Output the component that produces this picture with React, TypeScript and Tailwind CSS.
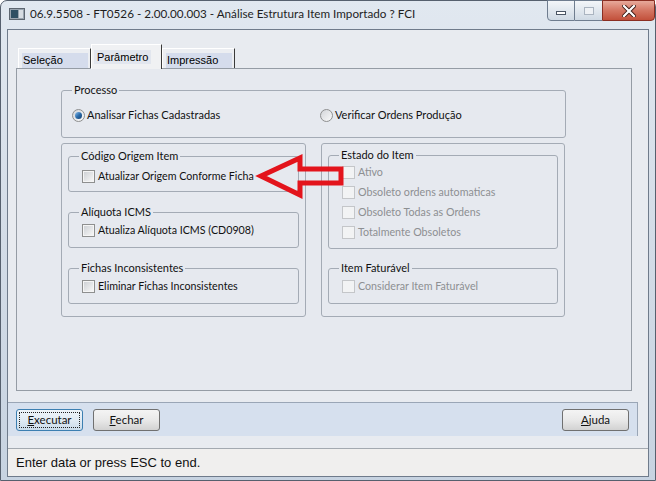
import React from "react";

const seg = { fontFamily: '"Lato", "Open Sans", sans-serif' };
const ms = { fontFamily: '"Liberation Sans", Arial, sans-serif' };

function Box({ disabled }: { disabled?: boolean }) {
  return disabled ? (
    <span className="w-[13px] h-[13px] border border-[#c4c6c9] bg-[#f2f3f4] shrink-0" />
  ) : (
    <span className="w-[13px] h-[13px] border border-[#8e8f8f] p-[1px] bg-[#f5f5f5] shrink-0 flex">
      <span className="flex-1 bg-gradient-to-br from-[#cfd2d6] to-[#f6f6f6]" />
    </span>
  );
}

function Check({
  label,
  disabled,
  className = "",
}: {
  label: string;
  disabled?: boolean;
  className?: string;
}) {
  return (
    <div className={`flex items-center h-[20px] ${className}`}>
      <Box disabled={disabled} />
      <span className={`ml-[3px] leading-[14px] text-[10.7px] ${disabled ? "text-[#8d8f92]" : "text-[#111]"}`}>{label}</span>
    </div>
  );
}

function Radio({ checked }: { checked?: boolean }) {
  return (
    <span className="w-[13px] h-[13px] rounded-full border border-[#8e8f8f] bg-gradient-to-br from-[#d3d5d9] to-[#fafafa] flex items-center justify-center shrink-0">
      {checked && <span className="w-[7px] h-[7px] rounded-full bg-gradient-to-br from-[#8cc0ee] via-[#2b6cab] to-[#163f6d]" />}
    </span>
  );
}

function Group({
  title,
  className = "",
  children,
}: {
  title?: string;
  className?: string;
  children?: React.ReactNode;
}) {
  return (
    <div className={`border border-[#a4abb5] rounded-[3px] ${className}`}>
      {title && (
        <div className="-mt-[8px] ml-[10px] px-[2px] w-fit h-[14px] leading-[14px] bg-[#e6e9ef] text-[#111]">{title}</div>
      )}
      {children}
    </div>
  );
}

function Btn({
  children,
  focused,
}: {
  children: React.ReactNode;
  focused?: boolean;
}) {
  return (
    <div
      className={`w-[67px] h-[22px] rounded-[3px] border p-[2px] flex ${
        focused
          ? "border-[#3c7fb1] bg-gradient-to-b from-[#eef4f9] via-[#e1ebf4] to-[#c9dbea]"
          : "border-[#707070] bg-gradient-to-b from-[#f4f4f4] via-[#e9e9e9] to-[#d2d2d2]"
      }`}
    >
      <div
        className={`flex-1 flex items-center justify-center text-[11.5px] text-[#111] leading-none ${
          focused ? "border border-dotted border-[#222]" : ""
        }`}
      >
        {children}
      </div>
    </div>
  );
}

function Tab({
  label,
  selected,
  w,
}: {
  label: string;
  selected?: boolean;
  w: string;
}) {
  if (selected) {
    return (
      <div className={`${w} h-[25px] -mb-[1px] relative z-10 bg-[#f0f1f3] border-t border-l border-white border-r border-r-[#3a3a3a] flex items-start pl-[2px] pt-[5px]`}>
        <span className="px-[3px] h-[14px] leading-[14px] bg-[#e2e6ee] text-[11px] text-black" style={ms}>
          {label}
        </span>
      </div>
    );
  }
  return (
    <div className={`${w} h-[20px] bg-[#eceef2] border-t border-l border-white border-r border-r-[#3a3a3a] flex items-start pl-[3px] pt-[4px]`}>
      <span className="flex-1 mr-[2px] pl-[1px] h-[15px] leading-[15px] bg-[#d5dcec] text-[11px] text-black" style={ms}>
        {label}
      </span>
    </div>
  );
}

export default function App() {
  return (
    <div className="w-[656px] h-[481px] bg-white relative overflow-hidden text-[11px]" style={seg}>
      <div className="w-full h-full rounded-t-[7px] border border-[#56606e] bg-gradient-to-b from-[#e1e8f0] via-[#d3dce7] to-[#c7d3e1] flex flex-col">
        {/* Title bar */}
        <div className="h-[28px] flex items-start shrink-0">
          <div className="flex items-center h-[26px] pl-[8px]">
            <svg width="16" height="12" viewBox="0 0 16 12" className="mr-[5px]">
              <rect x="0.5" y="0.5" width="15" height="11" fill="#9aa5b0" stroke="#5d6670" />
              <rect x="2" y="2" width="7" height="8" fill="#2f4f63" />
              <rect x="10" y="2" width="4" height="8" fill="#d7dde3" />
            </svg>
            <span className="text-[11.7px] text-[#1e1e1e]">06.9.5508 - FT0526 - 2.00.00.003 - Análise Estrutura Item Importado ? FCI</span>
          </div>
          <div className="ml-auto mr-0 flex h-[21px] -mt-[1px]">
            <div className="w-[28px] h-full rounded-bl-[4px] border border-[#6f7d8f] bg-gradient-to-b from-[#f3f6f9] to-[#cfd9e4] flex items-center justify-center">
              <span className="w-[10px] h-[4px] mt-[5px] border border-[#4a5564] bg-white" />
            </div>
            <div className="w-[27px] h-full border-y border-[#6f7d8f] bg-gradient-to-b from-[#f3f6f9] to-[#cfd9e4] flex items-center justify-center">
              <span className="w-[10px] h-[8px] border border-[#aab4c0] bg-[#eef1f5]" />
            </div>
            <div className="w-[53px] h-full rounded-br-[4px] border border-[#8a2e22] bg-gradient-to-b from-[#e7a99b] via-[#d47663] to-[#c2503b] flex items-center justify-center">
              <svg width="14" height="12" viewBox="0 0 14 12">
                <path d="M2 1 L12 11 M12 1 L2 11" stroke="#3b1a14" strokeWidth="4" strokeLinecap="square" />
                <path d="M2 1 L12 11 M12 1 L2 11" stroke="#ffffff" strokeWidth="2.2" strokeLinecap="square" />
              </svg>
            </div>
          </div>
        </div>

        {/* Client area */}
        <div className="mx-[6px] flex-1 border border-[#6f7b8b] bg-[#e8ebf0] flex flex-col">
          <div className="pt-[14px] pl-[8px] pr-[16px]">
            {/* tabs */}
            <div className="h-[24px] flex items-end pl-[2px]">
              <Tab label="Seleção" w="w-[73px]" />
              <Tab label="Parâmetro" w="w-[71px]" selected />
              <Tab label="Impressão" w="w-[73px]" />
            </div>
            {/* panel */}
            <div className="h-[323px] border border-[#959ca5] bg-[#e6e9ef] pt-[21px] pl-[44px]">
              <Group title="Processo" className="w-[505px] h-[48px]">
                <div className="mt-[8px] pl-[10px] flex items-center h-[20px]">
                  <div className="w-[248px] flex items-center">
                    <Radio checked />
                    <span className="ml-[2px] text-[#111]">Analisar Fichas Cadastradas</span>
                  </div>
                  <div className="flex items-center">
                    <Radio />
                    <span className="ml-[2px] text-[#111]">Verificar Ordens Produção</span>
                  </div>
                </div>
              </Group>
              <div className="mt-[5px] flex gap-[15px]">
                <Group className="w-[245px] h-[174px] pt-[12px]">
                  <Group title="Código Origem Item" className="mx-[6px] h-[36px]">
                    <Check label="Atualizar Origem Conforme Ficha" className="mt-[3px] pl-[13px]" />
                  </Group>
                  <Group title="Alíquota ICMS" className="mx-[6px] mt-[20px] h-[36px]">
                    <Check label="Atualiza Alíquota ICMS (CD0908)" className="mt-[1px] pl-[13px]" />
                  </Group>
                  <Group title="Fichas Inconsistentes" className="mx-[6px] mt-[20px] h-[36px]">
                    <Check label="Eliminar Fichas Inconsistentes" className="mt-[1px] pl-[13px]" />
                  </Group>
                </Group>
                <Group className="w-[244px] h-[174px] pt-[11px]">
                  <Group title="Estado do Item" className="mx-[6px] h-[94px]">
                    <div className="pl-[13px]">
                      <Check label="Ativo" disabled />
                      <Check label="Obsoleto ordens automaticas" disabled />
                      <Check label="Obsoleto Todas as Ordens" disabled />
                      <Check label="Totalmente Obsoletos" disabled />
                    </div>
                  </Group>
                  <Group title="Item Faturável" className="mx-[6px] mt-[19px] h-[36px]">
                    <Check label="Considerar Item Faturável" disabled className="mt-[1px] pl-[13px]" />
                  </Group>
                </Group>
              </div>
            </div>
          </div>

          {/* button bar */}
          <div className="mt-[11px] mr-[10px] h-[34px] border-t border-r border-[#9aa6b6] bg-[#d6e0ee] flex items-start pt-[6px] px-[8px]">
            <Btn focused>
              <span><span className="underline">E</span>xecutar</span>
            </Btn>
            <div className="w-[10px]" />
            <Btn>
              <span><span className="underline">F</span>echar</span>
            </Btn>
            <div className="ml-auto">
              <Btn>
                <span><span className="underline">A</span>juda</span>
              </Btn>
            </div>
          </div>

          {/* status bar */}
          <div className="mt-auto h-[28px] border-t border-[#a3a9b0] bg-[#f0efee] flex items-center pl-[8px]">
            <span className="text-[13px] text-[#111]" style={ms}>Enter data or press ESC to end.</span>
          </div>
        </div>
        <div className="h-[3px] shrink-0" />
      </div>

      {/* red annotation arrow */}
      <svg className="absolute left-0 top-0 pointer-events-none" width="656" height="481" viewBox="0 0 656 481">
        <polygon
          points="261,176 300,158 300,169 341,169 341,183 300,183 300,195"
          fill="none"
          stroke="#e3141c"
          strokeWidth="5"
          strokeLinejoin="miter"
        />
      </svg>
    </div>
  );
}
